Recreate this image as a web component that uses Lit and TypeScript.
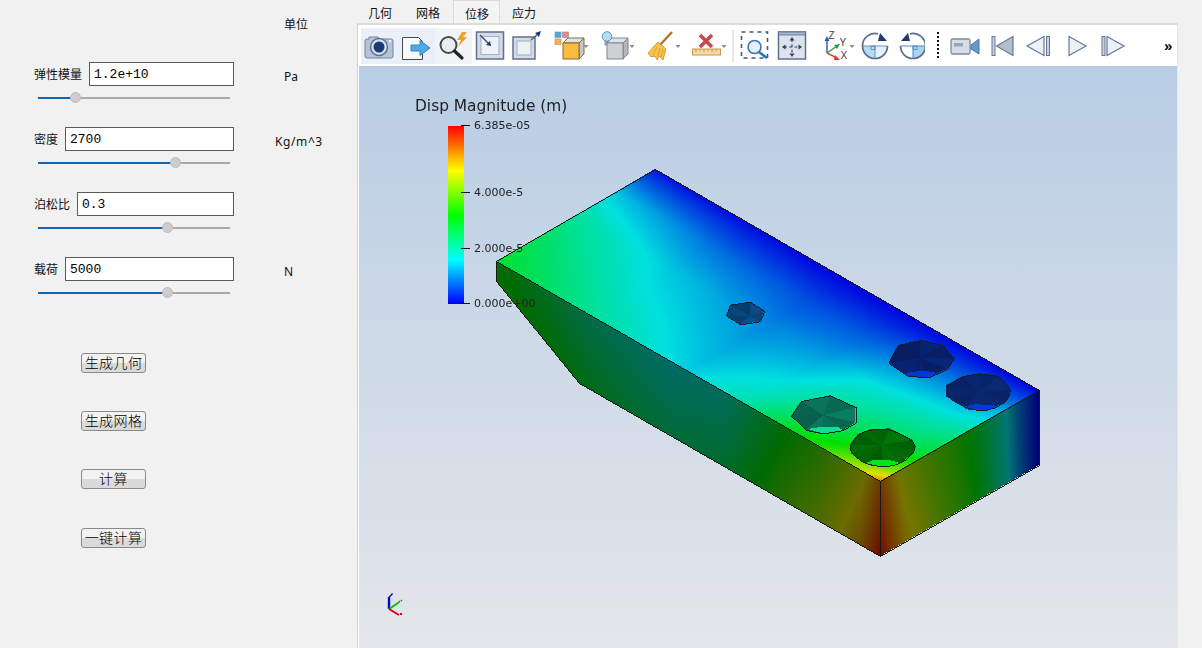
import { LitElement, html, css, svg } from "lit";
import { customElement } from "lit/decorators.js";

type P = [number, number];
const OX = 360, OY = 66, CW = 818, CH = 582;

function jet(t: number, b: number): [number, number, number] {
  t = Math.max(0, Math.min(1, t));
  let r = 0, g = 0, bl = 0;
  if (t < 0.25) { g = t / 0.25; bl = 1; }
  else if (t < 0.5) { g = 1; bl = 1 - (t - 0.25) / 0.25; }
  else if (t < 0.75) { g = 1; r = (t - 0.5) / 0.25; }
  else { r = 1; g = 1 - (t - 0.75) / 0.25; }
  return [r * 255 * b, g * 255 * b, bl * 255 * b];
}

const lerp1 = (xs: number[], ys: number[], x: number) => {
  if (x <= xs[0]) return ys[0];
  for (let i = 1; i < xs.length; i++) {
    if (x <= xs[i]) return ys[i - 1] + ((ys[i] - ys[i - 1]) * (x - xs[i - 1])) / (xs[i] - xs[i - 1]);
  }
  return ys[ys.length - 1];
};

const UK = [0, 0.25, 0.5, 0.65, 0.75, 0.85, 0.95, 1];
const VK = [0, 0.1, 0.25, 0.5, 0.75, 1];
const GRID = [
  [0.45, 0.43, 0.4, 0.33, 0.22, 0.02],
  [0.33, 0.31, 0.27, 0.22, 0.13, 0.01],
  [0.23, 0.21, 0.19, 0.15, 0.09, 0.0],
  [0.32, 0.29, 0.25, 0.18, 0.1, 0.0],
  [0.45, 0.4, 0.33, 0.25, 0.13, 0.0],
  [0.55, 0.47, 0.38, 0.28, 0.15, 0.0],
  [0.72, 0.58, 0.42, 0.31, 0.17, 0.0],
  [0.85, 0.65, 0.47, 0.34, 0.2, 0.0],
];
const topField = (u: number, v: number) => {
  const col = GRID.map((row) => lerp1(VK, row, v));
  return lerp1(UK, col, u);
};

const inPoly = (poly: P[], x: number, y: number) => {
  let c = false;
  for (let i = 0, j = poly.length - 1; i < poly.length; j = i++) {
    const [xi, yi] = poly[i], [xj, yj] = poly[j];
    if (yi > y !== yj > y && x < ((xj - xi) * (y - yi)) / (yj - yi) + xi) c = !c;
  }
  return c;
};

const Z = (pts: number[]): P[] => {
  const out: P[] = [];
  for (let i = 0; i < pts.length; i += 2) out.push([700.5 + pts[i] / 3, 290 + pts[i + 1] / 3]);
  return out;
};

const chaikin = (p: P[]): P[] => {
  const out: P[] = [];
  p.forEach((a, i) => {
    const b = p[(i + 1) % p.length];
    out.push([a[0] * 0.75 + b[0] * 0.25, a[1] * 0.75 + b[1] * 0.25]);
    out.push([a[0] * 0.25 + b[0] * 0.75, a[1] * 0.25 + b[1] * 0.75]);
  });
  return out;
};

interface Hole { v: P[]; c: P; col: number[]; amp: number; round?: boolean; cres?: P[]; cc?: number[]; }
const HOLES: Hole[] = [
  { v: Z([92, 44, 152, 35, 194, 62, 182, 94, 122, 103, 80, 76]), c: Z([150, 78])[0], col: [8, 68, 122], amp: 0.7 },
  { v: Z([595, 165, 665, 150, 730, 165, 763, 205, 745, 235, 690, 262, 625, 258, 567, 218]), c: Z([660, 205])[0], col: [8, 32, 105], amp: 0.6,
    cres: Z([620, 250, 640, 245, 680, 243, 720, 250, 690, 262, 625, 258]), cc: [0, 55, 215] },
  { v: Z([741, 285, 790, 258, 840, 250, 900, 258, 935, 300, 920, 335, 860, 363, 800, 355, 741, 320]), c: Z([835, 305])[0], col: [8, 38, 108], amp: 0.3, round: true,
    cres: Z([790, 350, 830, 343, 880, 345, 895, 350, 860, 363, 800, 358]), cc: [0, 60, 220] },
  { v: Z([275, 377, 305, 333, 392, 316, 468, 352, 468, 397, 430, 420, 370, 430, 320, 420]), c: Z([372, 375])[0], col: [8, 108, 84], amp: 0.6,
    cres: Z([325, 417, 370, 410, 415, 411, 430, 420, 370, 430]), cc: [20, 222, 150] },
  { v: Z([450, 465, 475, 432, 510, 418, 570, 415, 640, 450, 648, 480, 605, 520, 550, 530, 495, 520, 455, 490]), c: Z([548, 465])[0], col: [0, 102, 4], amp: 0.55, round: true,
    cres: Z([495, 520, 520, 511, 570, 510, 605, 520, 550, 530]), cc: [0, 230, 30] },
];

const caret = (x: number) => svg`<polygon points="${x - 2.5},-1 ${x + 2.5},-1 ${x},2" fill="#8a8a8a"/>`;
const S = "#66789a";

const cubeBase = (front: string, side: string, stroke: string) => svg`
  <polygon points="-8,-3 -3,-8 13,-8 8,-3" fill="#dfe3e8" stroke="${stroke}"/>
  <polygon points="8,-3 13,-8 13,8 8,13" fill="${side}" stroke="${stroke}"/>
  <rect x="-8" y="-3" width="16" height="16" fill="${front}" stroke="${stroke}"/>`;

const TOOLS: { a: number; b: number; c: number; g: unknown }[] = [
  { a: 361, b: 398, c: 379, g: svg`
    <path d="M-10,-9 h9 l1,2 h12 a2,2 0 0 1 2,2 v15 a2,2 0 0 1 -2,2 h-24 a2,2 0 0 1 -2,-2 v-15 a2,2 0 0 1 2,-2 h2 z" fill="#b4c5d9" stroke="#71849f"/>
    <circle cx="0" cy="1" r="8.5" fill="#d5e0ec" stroke="#5d708e" stroke-width="1.5"/>
    <circle cx="0" cy="1" r="5.5" fill="#1d3a72"/>
    <circle cx="11" cy="-5" r="1.2" fill="#f4f7fb"/>` },
  { a: 398, b: 435, c: 416, g: svg`
    <path d="M-13.5,-8.5 h16 l4,4 v18 h-20 z" fill="#f7f8fa" stroke="#4a4a4a"/>
    <path d="M-5,-1 h9 v-4.5 l10,7.5 l-10,7.5 v-4.5 h-9 z" fill="#52a8e4" stroke="#2e86c6"/>` },
  { a: 435, b: 472, c: 453, g: svg`
    <circle cx="-4.5" cy="-1" r="8" fill="#e9edf2" stroke="#4b4b4b" stroke-width="2"/>
    <path d="M1.5,5 L9,12" stroke="#222" stroke-width="3.2" stroke-linecap="round"/>
    <polygon points="9,-14 4,-6 8,-6 5,1 14,-9 10,-9 14,-14" fill="#f0a128"/>` },
  { a: 472, b: 508, c: 490, g: svg`
    <rect x="-13.5" y="-14" width="27" height="27" fill="#d4dbe4" stroke="#5f7090" stroke-width="1.5"/>
    <rect x="-9" y="-9.5" width="18" height="18" fill="#eef1f5" stroke="#a3aec0"/>
    <path d="M-10,-11 L0,-1" stroke="#3b4d70" stroke-width="1.4"/>
    <polygon points="1,0 -4,-1 0,-5" fill="#1f3a6e"/>` },
  { a: 508, b: 545, c: 526, g: svg`
    <rect x="-13" y="-9" width="22" height="22" fill="#d4dbe4" stroke="#5f7090" stroke-width="1.5"/>
    <rect x="-9" y="-5" width="14" height="14" fill="#eef1f5" stroke="#a3aec0"/>
    <path d="M5,-6 L12,-12" stroke="#4a5c80" stroke-width="1.4"/>
    <polygon points="15,-15 9,-13 13,-9" fill="#1f3a6e"/>` },
  { a: 545, b: 593, c: 571, g: svg`
    <rect x="-16" y="-14" width="6" height="5.5" fill="#4fa4e4" stroke="#7aa0c0" stroke-width=".7"/>
    <rect x="-8.5" y="-14" width="6" height="5.5" fill="#e48a8a" stroke="#b08a90" stroke-width=".7"/>
    <rect x="-16" y="-7" width="6" height="5.5" fill="#f3b44a" stroke="#b89a60" stroke-width=".7"/>
    ${cubeBase("#fdbb44", "#c3c8cf", "#876a3a")}${caret(15)}` },
  { a: 593, b: 638, c: 615, g: svg`
    <circle cx="-8" cy="-9.5" r="4.8" fill="#b5def6" stroke="#5b94c4"/>
    <rect x="-10" y="-4.5" width="4" height="3.5" fill="#aab3bf" stroke="#6d7a8c" stroke-width=".7"/>
    ${cubeBase("#cdd1d6", "#b2b7be", "#7d8792")}${caret(17)}` },
  { a: 638, b: 684, c: 660, g: svg`
    <path d="M0,-1 L12,-14" stroke="#bc7326" stroke-width="2.4"/>
    <polygon points="-12,7 -2,-4 6,3 3,14 -1,10 -3,14 -5,10 -9,11" fill="#f6c24c" stroke="#c8892c" stroke-width=".8"/>
    <path d="M-3,1 L-7,9 M0,2 L-2,10 M3,3 L1,11" stroke="#d99a30" stroke-width=".8"/>
    ${caret(18)}` },
  { a: 684, b: 730, c: 706, g: svg`
    <path d="M-6,-11 L6,1 M6,-11 L-6,1" stroke="#c8474d" stroke-width="3.6"/>
    <rect x="-13.5" y="3" width="28" height="6" fill="#f2d8a2" stroke="#c79a4e"/>
    <path d="M-10,3 v3 M-6,3 v2 M-2,3 v3 M2,3 v2 M6,3 v3 M10,3 v2" stroke="#c48a3a" stroke-width=".8"/>
    ${caret(18)}` },
  { a: 730, b: 736, c: 733, g: svg`<path d="M0,-16 V16" stroke="#cfcfcf"/>` },
  { a: 736, b: 774, c: 755, g: svg`
    <rect x="-13.5" y="-14" width="26" height="26" fill="none" stroke="#3f5a86" stroke-width="1.6" stroke-dasharray="4 4"/>
    <circle cx="-0.5" cy="1" r="6.5" fill="#e4f0fa" stroke="#3f78ae" stroke-width="1.6"/>
    <path d="M4,6 L12,12" stroke="#2577b8" stroke-width="2.6"/>` },
  { a: 774, b: 812, c: 792, g: svg`
    <rect x="-13.5" y="-14" width="27" height="27" fill="#dde3ec" stroke="#566b8e" stroke-width="1.4"/>
    <rect x="-13.5" y="-14" width="27" height="3" fill="#a9b6c9" stroke="#566b8e" stroke-width=".8"/>
    <path d="M0,-7 V9 M-8,1 H8" stroke="#2c4060" stroke-width="1.1" stroke-dasharray="3 2.2"/>
    <polygon points="0,-9 -2.5,-5.5 2.5,-5.5" fill="#2c4060"/><polygon points="0,11 -2.5,7.5 2.5,7.5" fill="#2c4060"/>
    <polygon points="-10,1 -6.5,-1.5 -6.5,3.5" fill="#2c4060"/><polygon points="10,1 6.5,-1.5 6.5,3.5" fill="#2c4060"/>` },
  { a: 812, b: 857, c: 837, g: svg`
    <path d="M-10,7 V-6" stroke="#2b58b8" stroke-width="1.4"/><polygon points="-10,-10 -12.5,-5 -7.5,-5" fill="#2b58b8"/>
    <path d="M-10,7 L0,0" stroke="#2c9a4a" stroke-width="1.4"/><polygon points="3,-2 -3,-1 0,3" fill="#2c9a4a"/>
    <path d="M-10,7 L0,12" stroke="#d44" stroke-width="1.4"/><polygon points="3,14 -2,9 -3,14" fill="#e33"/>
    <text x="-8.5" y="-7" class="ax">Z</text><text x="2.5" y="0" class="ax">Y</text><text x="3.5" y="13" class="ax">X</text>
    ${caret(15)}` },
  { a: 857, b: 894, c: 875, g: svg`
    <path d="M-12.5,0 A12.5,12.5 0 0 0 0,12.5 V0 Z" fill="#b9dbf4"/>
    <path d="M12.5,0 A12.5,12.5 0 0 1 0,12.5 V0 Z" fill="#e6f2fb"/>
    <path d="M-12.5,0 H12.5 M0,0 V12.5" stroke="#5a88ba" stroke-width=".9"/>
    <rect x="-4" y="0" width="4" height="3.5" fill="none" stroke="#3f7fc0" stroke-width=".7"/>
    <path d="M12.5,0 A12.5,12.5 0 1 1 -12.5,0 A12.5,12.5 0 0 1 3,-12.2" fill="none" stroke="#5a6f8e" stroke-width="1.7"/>
    <polygon points="12,-5 5,-13 3,-5" fill="#1f3a6e"/>` },
  { a: 894, b: 925, c: 913, g: svg`
    <path d="M0,0 H12.5 A12.5,12.5 0 0 1 0,12.5 Z" fill="#a9d4f2"/>
    <path d="M-12.5,0 H12.5 M0,0 V12.5" stroke="#3f7fc0" stroke-width=".9"/>
    <rect x="0" y="0" width="4" height="3.5" fill="none" stroke="#3f7fc0" stroke-width=".7"/>
    <path d="M-12.5,0 A12.5,12.5 0 1 0 12.5,0 A12.5,12.5 0 0 0 -3,-12.2" fill="none" stroke="#5a6f8e" stroke-width="1.7"/>
    <polygon points="-12,-5 -5,-13 -3,-5" fill="#1f3a6e"/>` },
  { a: 925, b: 950, c: 938, g: svg`<path d="M0,-14 V12" stroke="#111" stroke-width="2" stroke-dasharray="2 2"/>` },
  { a: 950, b: 984, c: 965, g: svg`
    <rect x="-14" y="-7" width="19" height="15" rx="1.5" fill="#d6dde7" stroke="#7b8ba6" stroke-width="1.3"/>
    <rect x="-11" y="-3" width="9" height="3.5" fill="#9aa4b2"/>
    <polygon points="6,-1 14,-7 14,8 6,3" fill="#5b9bd0" stroke="#5f7390"/>` },
  { a: 984, b: 1020, c: 1002, g: svg`
    <rect x="-10" y="-9.5" width="3" height="19" fill="#c7d0dd" stroke="${S}"/>
    <polygon points="-5.5,0 11,-9.5 11,9.5" fill="#b4bfce" stroke="${S}" stroke-width="1.2"/>` },
  { a: 1020, b: 1058, c: 1038, g: svg`
    <polygon points="-11,0 6,-9.5 6,9.5" fill="#edf0f5" stroke="${S}" stroke-width="1.2"/>
    <rect x="8.5" y="-9.5" width="3" height="19" fill="#c7d0dd" stroke="${S}"/>` },
  { a: 1058, b: 1095, c: 1077, g: svg`
    <polygon points="-8,-9.5 9,0 -8,9.5" fill="#edf0f5" stroke="${S}" stroke-width="1.2"/>` },
  { a: 1095, b: 1132, c: 1113, g: svg`
    <rect x="-11" y="-9.5" width="3" height="19" fill="#c7d0dd" stroke="${S}"/>
    <polygon points="-6,-9.5 11,0 -6,9.5" fill="#edf0f5" stroke="${S}" stroke-width="1.2"/>` },
];

const FIELDS = [
  { label: "弹性模量", value: "1.2e+10", unit: "Pa", pct: 19.3, kg: false },
  { label: "密度", value: "2700", unit: "Kg/m^3", pct: 71.4, kg: true },
  { label: "泊松比", value: "0.3", unit: "", pct: 67.7, kg: false },
  { label: "载荷", value: "5000", unit: "N", pct: 67.7, kg: false },
];

@customElement("app-root")
export class AppRoot extends LitElement {
  static styles = css`
    :host { display: block; width: 1202px; height: 648px; overflow: hidden; background: #f1f1f1;
      font-family: "Noto Sans CJK SC", "Noto Sans", sans-serif; color: #111; }
    .root { display: flex; height: 648px; }
    .panel { width: 323px; padding-left: 34px; flex: none; display: flex; flex-direction: column; }
    .head { height: 62px; padding: 15px 0 0 250px; box-sizing: border-box; font-size: 12px; line-height: 18px; }
    .field { height: 65px; display: flex; }
    .controls { width: 200px; flex: none; }
    .line { display: flex; align-items: center; gap: 7px; height: 24px; }
    .lab { font-size: 12px; white-space: nowrap; padding-bottom: 2px; }
    input { flex: 1; min-width: 0; box-sizing: border-box; height: 24px; border: 1px solid #5a5a5a; background: #fff;
      padding: 0 3px 0 4px; font: 13px "Liberation Mono", monospace; color: #000; outline: none; }
    .slider { display: flex; align-items: center; margin: 6px 4px 0; height: 11px; width: 192px; }
    .fill { height: 2px; background: #0f66b8; }
    .rest { height: 2px; flex: 1; background: #a9a9a9; }
    .thumb { width: 11px; height: 11px; border-radius: 50%; background: #cdcdcd; border: 1px solid #bdbdbd;
      box-sizing: border-box; margin: 0 -5.5px; flex: none; position: relative; }
    .unit { margin: 6px 0 0 50px; font: 12px/18px "Noto Sans", sans-serif; white-space: nowrap; }
    .unit.kg { margin-left: 41px; letter-spacing: .6px; }
    .btns { margin: 31px 0 0 47px; display: flex; flex-direction: column; gap: 38px; align-items: flex-start; }
    button { width: 65px; height: 20px; padding: 0 0 3px; border: 1px solid #8a8a8a; border-radius: 3px; box-sizing: border-box;
      background: linear-gradient(#f2f2f2 50%, #dadada 50%); font: 300 14px/16px "Noto Sans CJK SC", sans-serif; color: #000;
      letter-spacing: .4px; white-space: nowrap; overflow: hidden; }
    button.last { margin-top: 1px; }
    .main { width: 821px; flex: none; display: flex; flex-direction: column; }
    .tabs { display: flex; height: 24px; margin-left: -1px; flex: none; }
    .tab { width: 48px; text-align: center; font-size: 12px; line-height: 26px; box-sizing: border-box; }
    .tab.sel { width: 47px; margin-left: 1px; border: 1px solid #dcdcdc; border-bottom: 0; background: #f4f4f4; line-height: 25px; padding-left: 1px; }
    .pane { flex: 1; display: flex; flex-direction: column; background: #fff; border-top: 2px solid #dcdcdc;
      border-left: 1px solid #d2d2d2; border-right: 1px solid #e6e6e6; padding: 0 0 0 1px; min-height: 0; margin-top: -1px; }
    .toolbar { height: 41px; box-sizing: border-box; padding: 3px 0 0 2px; display: flex; align-items: flex-start; flex: none; }
    .tool { display: block; flex: none; }
    .tool.h1 { background: #e9f0f8; }
    .tool.h2 { background: #f0f4f9; }
    .ax { font: 10px "Liberation Sans", sans-serif; fill: #444; }
    .more { margin-left: 32px; font: bold 15px/36px "Liberation Sans", sans-serif; color: #000; }
    .view { flex: 1; position: relative; overflow: hidden;
      background: linear-gradient(#b8cde4, #e4e6ea); font-family: "DejaVu Sans", sans-serif; color: #222; }
    canvas { position: absolute; left: 0; top: 0; display: block; }
    .title { position: absolute; left: 56px; top: 31px; font-size: 15.4px; line-height: 18px; white-space: nowrap; }
    .bar { position: absolute; left: 89px; top: 60px; width: 16px; height: 178px;
      background: linear-gradient(#ff0000, #ffff00 25%, #00ff00 50%, #00ffff 75%, #0000ff); }
    .tick { position: absolute; left: 102px; width: 9px; height: 1px; background: #111; }
    .val { position: absolute; left: 115px; font-size: 11px; line-height: 14px; white-space: nowrap; }
    .triad { position: absolute; left: 20px; top: 520px; }
  `;

  firstUpdated() {
    const cv = this.renderRoot.querySelector("canvas") as HTMLCanvasElement;
    const ctx = cv.getContext("2d")!;
    const img = ctx.createImageData(CW, CH);
    const px = (x: number, y: number, c: number[]) => {
      x = Math.round(x) - OX; y = Math.round(y) - OY;
      if (x < 0 || y < 0 || x >= CW || y >= CH) return;
      const i = (y * CW + x) * 4;
      img.data[i] = c[0]; img.data[i + 1] = c[1]; img.data[i + 2] = c[2]; img.data[i + 3] = 255;
    };
    const fill = (poly: P[], f: (x: number, y: number) => number[]) => {
      const xs = poly.map((p) => p[0]), ys = poly.map((p) => p[1]);
      for (let y = Math.floor(Math.min(...ys)); y <= Math.ceil(Math.max(...ys)); y++)
        for (let x = Math.floor(Math.min(...xs)); x <= Math.ceil(Math.max(...xs)); x++)
          if (inPoly(poly, x + 0.5, y + 0.5)) px(x, y, f(x + 0.5, y + 0.5));
    };
    const line = (a: P, b: P, c: number[]) => {
      const n = Math.max(1, Math.ceil(Math.max(Math.abs(b[0] - a[0]), Math.abs(b[1] - a[1]))));
      for (let i = 0; i <= n; i++) px(a[0] + ((b[0] - a[0]) * i) / n, a[1] + ((b[1] - a[1]) * i) / n, c);
    };

    const A: P = [497, 261], B: P = [656, 169], C: P = [1040, 390], D: P = [881, 481];
    const E: P = [881, 556], F: P = [580, 383], G: P = [497, 281], H: P = [1040, 465];
    const Lx = D[0] - A[0], Ly = D[1] - A[1], Sx = B[0] - A[0], Sy = B[1] - A[1];
    const det = Lx * Sy - Ly * Sx;
    fill([A, B, C, D], (x, y) => {
      const dx = x - A[0], dy = y - A[1];
      const u = (dx * Sy - dy * Sx) / det, v = (Lx * dy - Ly * dx) / det;
      return jet(topField(u, v), 0.88);
    });
    const fu = [0, 0.25, 0.45, 0.6, 0.75, 0.85, 0.95, 1];
    const ft = [0.5, 0.33, 0.26, 0.29, 0.48, 0.58, 0.72, 0.86];
    fill([A, D, E, F, G], (x, y) => {
      const u = (x - A[0]) / Lx;
      const h = (y - (A[1] + (x - A[0]) * (Ly / Lx))) / 75;
      return jet(lerp1(fu, ft, u) + h * 0.11, 0.42);
    });
    const rw = [0, 0.15, 0.35, 0.55, 0.65, 0.79, 0.87, 1];
    const rt = [0.88, 0.71, 0.6, 0.5, 0.42, 0.26, 0.14, 0.0];
    fill([D, C, H, E], (x, y) => {
      const w = (x - D[0]) / 159;
      const h = (y - (D[1] - (x - D[0]) * 0.572)) / 75;
      return jet(lerp1(rw, rt, w) + h * 0.1 * (1 - w), 0.46);
    });

    const shades = [-0.14, 0.12, -0.05, 0.25, -0.1, 0.05, 0.18, -0.18, 0, 0.15];
    for (const hole of HOLES) {
      const n = hole.v.length;
      const edge = hole.round ? chaikin(chaikin(hole.v)) : hole.v;
      if (hole.round) fill(edge, () => hole.col);
      for (let i = 0; i < n; i++) {
        const s = 1 + shades[i % shades.length] * hole.amp;
        const c = hole.col.map((k) => Math.min(255, k * s));
        fill([hole.c, hole.v[i], hole.v[(i + 1) % n]], () => c);
      }
      if (hole.cres) fill(hole.cres, () => hole.cc!);
      edge.forEach((p, i) => line(p, edge[(i + 1) % edge.length], [20, 32, 40]));
    }
    const k = [24, 24, 24];
    [[A, B], [B, C], [A, D], [D, C], [D, E], [C, H], [H, E], [E, F], [F, G], [G, A]].forEach(([a, b]) => line(a as P, b as P, k));
    ctx.putImageData(img, 0, 0);
  }

  render() {
    return html`
      <div class="root">
        <div class="panel">
          <div class="head">单位</div>
          ${FIELDS.map((f) => html`
            <div class="field">
              <div class="controls">
                <div class="line"><span class="lab">${f.label}</span><input .value=${f.value} /></div>
                <div class="slider">
                  <div class="fill" style="width:${f.pct}%"></div>
                  <div class="thumb"></div>
                  <div class="rest"></div>
                </div>
              </div>
              <div class="unit ${f.kg ? "kg" : ""}">${f.unit}</div>
            </div>`)}
          <div class="btns">
            <button>生成几何</button>
            <button>生成网格</button>
            <button>计算</button>
            <button class="last">一键计算</button>
          </div>
        </div>
        <div class="main">
          <div class="tabs">
            <div class="tab">几何</div><div class="tab">网格</div><div class="tab sel">位移</div><div class="tab">应力</div>
          </div>
          <div class="pane">
            <div class="toolbar">
              ${TOOLS.map((t, i) => html`
                <svg class="tool ${i < 2 ? "h1" : i === 2 ? "h2" : ""}" width=${t.b - t.a} height="36"
                  viewBox="${t.a - t.c} -18 ${t.b - t.a} 36">${t.g}</svg>`)}
              <span class="more">»</span>
            </div>
            <div class="view">
              <canvas width=${CW} height=${CH}></canvas>
              <div class="title">Disp Magnitude (m)</div>
              <div class="bar"></div>
              ${[59, 126, 182, 237].map((y) => html`<div class="tick" style="top:${y}px"></div>`)}
              ${[["6.385e-05", 53], ["4.000e-5", 120], ["2.000e-5", 176], ["0.000e+00", 231]].map(
                ([t, y]) => html`<div class="val" style="top:${y}px">${t}</div>`)}
              <svg class="triad" width="30" height="40" viewBox="0 0 30 40">
                <path d="M10,23 V11" stroke="#0000e0" stroke-width="2.4"/>
                <path d="M10,11 L13,8.5 M12,8 h2" stroke="#0000e0" stroke-width="1.2" fill="none"/>
                <path d="M10,23 L19,17" stroke="#00c000" stroke-width="2"/>
                <path d="M19,17 L21,15 M22,14 l1,1" stroke="#00a000" stroke-width="1.4" fill="none"/>
                <path d="M10,23 L20,29" stroke="#e00000" stroke-width="2"/>
                <path d="M21,27 l2,2 M23,27 l-2,2" stroke="#e00000" stroke-width="1" fill="none"/>
              </svg>
            </div>
          </div>
        </div>
      </div>
    `;
  }
}
